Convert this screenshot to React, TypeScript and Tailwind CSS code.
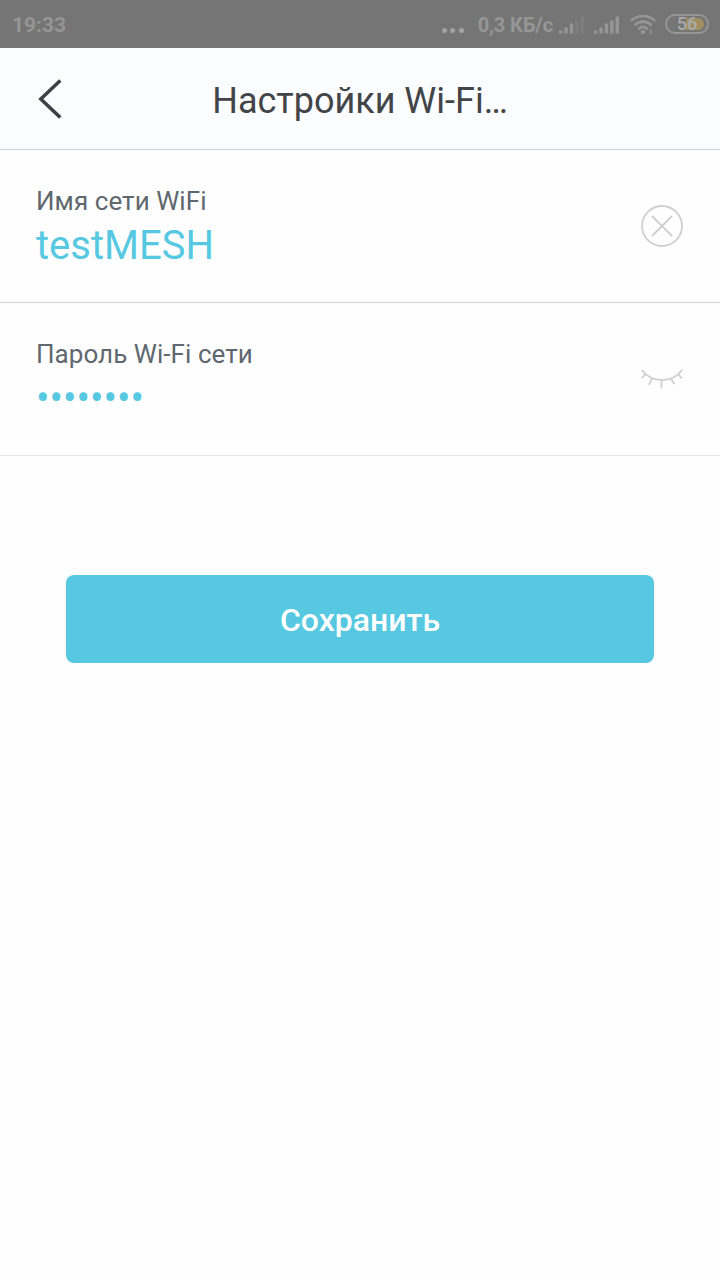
import type { ReactNode } from 'react'

function SignalIcon({ dim = 5 }: { dim?: number }) {
	const bars = [3, 6, 10, 13, 17]

	return (
		<svg className="h-[18px] w-[27px]" viewBox="0 0 27 18" fill="currentColor" aria-hidden="true">
			{bars.map((height, i) => (
				<rect
					key={height}
					x={i * 5.4}
					y={17.5 - height}
					width="3.400"
					height={height}
					opacity={i >= dim ? 0.3 : 1}
				/>
			))}
		</svg>
	)
}

function WifiIcon() {
	return (
		<svg
			className="h-5 w-[27px]"
			viewBox="0 0 27 20"
			fill="none"
			stroke="currentColor"
			strokeWidth="2.600"
			aria-hidden="true"
		>
			<path d="M.800 6C7.500-.700 18.500-.700 25.200 6" />
			<path d="M4.500 10.200C9.500 5.400 16.500 5.400 21.500 10.200" />
			<path d="M8.300 14.200C11.300 11.300 14.700 11.300 17.700 14.200" />
			<circle cx="13" cy="16.900" r="2.200" fill="currentColor" stroke="none" />
			<path d="M20.700 14.500v4.500" strokeWidth="1.400" />
		</svg>
	)
}

function StatusBar() {
	return (
		<div className="flex h-12 items-center justify-between bg-[#757575] pr-[11px] pl-3 text-[20px] font-bold text-[#969696]">
			<span className="pt-[3px] text-[21px]">19:33</span>
			<div className="flex items-center pt-px">
				<div className="mt-3 mr-[14px] flex gap-[3.500px]">
					<span className="size-[5px] rounded-full bg-[#a3a3a3]" />
					<span className="size-[5px] rounded-full bg-[#a3a3a3]" />
					<span className="size-[5px] rounded-full bg-[#a3a3a3]" />
				</div>
				<span className="mr-1.5 tracking-[-0.1px]">0,3 КБ/с</span>
				<span className="mr-2">
					<SignalIcon dim={3} />
				</span>
				<span className="mr-[9px]">
					<SignalIcon />
				</span>
				<WifiIcon />
				<div className="relative -mt-px ml-2 flex h-5 w-11 items-center justify-center rounded-full border-2 border-current">
					<span className="absolute inset-y-[2px] right-[3px] w-[18px] rounded-r-full bg-[#a08f63]" />
					<span className="relative text-[18px] leading-none font-medium text-[#aaaaaa]">56</span>
				</div>
			</div>
		</div>
	)
}

function Header({ title }: { title: string }) {
	return (
		<header className="relative flex h-[102px] items-center justify-center border-b border-[#cfd0d1] bg-[#fbfcfe]">
			<button type="button" aria-label="Назад" className="absolute top-[31px] left-[38px] text-[#3c3f43]">
				<svg className="h-10 w-6" viewBox="0 0 24 40" fill="none" stroke="currentColor" strokeWidth="3.500">
					<path d="M22.300 1.500L2.800 20l19.500 18.500" />
				</svg>
			</button>
			<h1 className="pt-[5px] text-[36px] leading-[42px] text-[#424447]">{title}</h1>
		</header>
	)
}

function ClearIcon() {
	return (
		<svg className="size-[42px]" viewBox="0 0 42 42" fill="none" stroke="currentColor" strokeWidth="1.800">
			<circle cx="21" cy="21" r="20" />
			<path d="M11 11l20 20M31 11L11 31" />
		</svg>
	)
}

function ClosedEyeIcon() {
	return (
		<svg className="h-5 w-[42px]" viewBox="0 0 42 20" fill="none" stroke="currentColor" strokeWidth="1.800">
			<path d="M.800 1C11 14.300 31 14.300 41.200 1" />
			<path d="M4.500 5L.800 9.200M11 9.500L7.800 15.800M20.500 11v8.300M30 9.500l3.300 5.800M37 5l4 4.500" />
		</svg>
	)
}

type FieldProps = {
	label: string
	value: string
	icon: ReactNode
	actionLabel: string
	className?: string
}

function Field({ label, value, icon, actionLabel, className }: FieldProps) {
	return (
		<div className={`flex h-[153px] items-center justify-between border-b pr-[37px] pl-9 ${className}`}>
			<div className="pt-[3px]">
				<div className="text-[26px] leading-[30px] tracking-[0.05px] text-[#5f686e]">{label}</div>
				<div className="mt-1.5 text-[40px] leading-[48px] text-[#56c8e1]">{value}</div>
			</div>
			<button type="button" aria-label={actionLabel} className="text-[#cfcfcf]">
				{icon}
			</button>
		</div>
	)
}

export default function App() {
	return (
		<div className="min-h-screen bg-[#fefefe] font-['Roboto',sans-serif]">
			<StatusBar />
			<Header title="Настройки Wi-Fi…" />
			<main>
				<Field
					label="Имя сети WiFi"
					value="testMESH"
					icon={<ClearIcon />}
					actionLabel="Очистить"
					className="border-[#d2d2d2]"
				/>
				<Field
					label="Пароль Wi-Fi сети"
					value="••••••••"
					icon={<ClosedEyeIcon />}
					actionLabel="Показать пароль"
					className="border-[#e8e8e8]"
				/>
				<div className="px-[66px] pt-[119px]">
					<button
						type="button"
						className="h-[88px] w-full rounded-lg bg-[#56c8e1] pt-0.5 text-[32px] font-medium text-white"
					>
						Сохранить
					</button>
				</div>
			</main>
		</div>
	)
}
